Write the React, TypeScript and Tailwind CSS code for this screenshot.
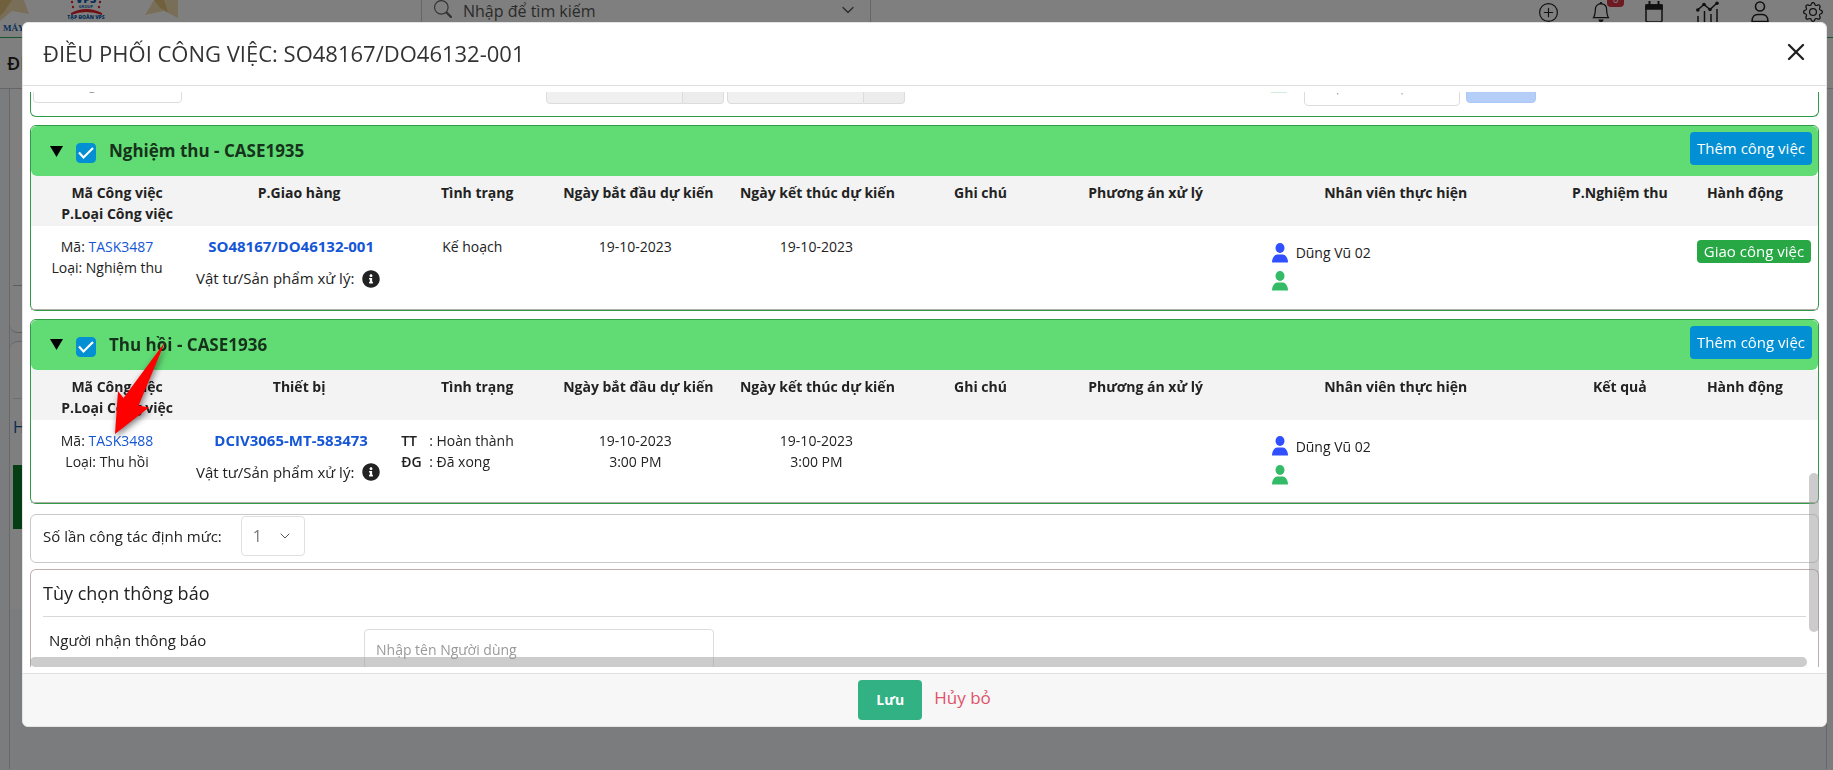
import React, { useState } from "react";
import { ChevronDown, X } from "lucide-react";
import { BsBell, BsGear, BsPlusCircle, BsSearch } from "react-icons/bs";
import { FaInfoCircle } from "react-icons/fa";

const CARD = "shrink-0 rounded-md border border-[#2f9b46] bg-white";
const FIELD = "h-10 rounded border border-[#dcdcdc] px-[11px] text-sm placeholder:text-[#999] outline-none";

type Task = {
  id: string;
  title: string;
  code: string;
  kind: string;
  refColumn: string;
  refCode: string;
  resultColumn: string;
  status: React.ReactNode;
  start: string[];
  end: string[];
  assignee: string;
  canAssign?: boolean;
};

const TASKS: Task[] = [
  {
    id: "case1935",
    title: "Nghiệm thu - CASE1935",
    code: "TASK3487",
    kind: "Nghiệm thu",
    refColumn: "P.Giao hàng",
    refCode: "SO48167/DO46132-001",
    resultColumn: "P.Nghiệm thu",
    status: <p className="pr-2.5 text-center">Kế hoạch</p>,
    start: ["19-10-2023"],
    end: ["19-10-2023"],
    assignee: "Dũng Vũ 02",
    canAssign: true,
  },
  {
    id: "case1936",
    title: "Thu hồi - CASE1936",
    code: "TASK3488",
    kind: "Thu hồi",
    refColumn: "Thiết bị",
    refCode: "DCIV3065-MT-583473",
    resultColumn: "Kết quả",
    status: (
      <dl className="grid grid-cols-[28px_1fr] pl-1.5">
        <dt className="font-semibold">TT</dt>
        <dd>: Hoàn thành</dd>
        <dt className="font-semibold">ĐG</dt>
        <dd>: Đã xong</dd>
      </dl>
    ),
    start: ["19-10-2023", "3:00 PM"],
    end: ["19-10-2023", "3:00 PM"],
    assignee: "Dũng Vũ 02",
  },
];

function Logo() {
  return (
    <svg width="180" height="38" viewBox="0 0 180 38" className="shrink-0">
      <path d="M0 0h24l5 14-17-3L0 21z" fill="#f3dfb0" />
      <path d="M0 0h12L4 12l-4 4z" fill="#e2c078" />
      <path d="M154 0h24v18l-14-7-19 4z" fill="#f3dfb0" />
      <path d="M154 0h10l4 12-8-4z" fill="#e2c078" />
      <text x="86" y="3" textAnchor="middle" fontSize="11" fontWeight="800" fill="#0f5fae">VPS</text>
      <text x="86" y="8" textAnchor="middle" fontSize="4" fontWeight="700" fill="#0f5fae">GROUP</text>
      <g fill="#e01f2d">
        <circle cx="72" cy="2" r="1.2" />
        <circle cx="73" cy="7" r="1.2" />
        <circle cx="100" cy="2" r="1.2" />
        <circle cx="99" cy="7" r="1.2" />
        <path d="M71 13q15-8 31 0v2q-16-6-31 0z" />
      </g>
      <text x="86" y="19" textAnchor="middle" fontSize="5" fontWeight="800" fill="#0f5fae">TẬP ĐOÀN VPS</text>
      <text x="3" y="31" fontSize="9" fontWeight="800" fontFamily="Liberation Serif, serif" fill="#0f5fae">MÁY</text>
    </svg>
  );
}

function CalendarIcon() {
  return (
    <svg width="18" height="22" viewBox="0 0 18 22" fill="none" stroke="currentColor" strokeWidth="1.5">
      <rect x="1" y="4" width="16" height="17" rx="1.5" />
      <path d="M1 4h16v4H1z" fill="currentColor" />
      <path d="M4.5 0v4M13.5 0v4" strokeWidth="2" />
    </svg>
  );
}

function ChartIcon() {
  return (
    <svg width="23" height="22" viewBox="0 0 23 22" fill="none" stroke="currentColor" strokeWidth="1.5">
      <path d="M1.5 9 8 3.500l6 5L21 2M2 15v7M8.500 10v12M15 13v9M21 8v14" />
      <g fill="currentColor" stroke="none">
        <circle cx="1.800" cy="9" r="1.800" />
        <circle cx="8" cy="3.500" r="1.800" />
        <circle cx="14" cy="8.500" r="1.800" />
        <circle cx="21" cy="2.200" r="1.800" />
      </g>
    </svg>
  );
}

function PersonIcon() {
  return (
    <svg width="18" height="22" viewBox="0 0 18 22" fill="none" stroke="currentColor" strokeWidth="1.600">
      <circle cx="9" cy="5.500" r="4.500" />
      <path d="M1 20.500c0-5 3-7 5.500-7h5c2.500 0 5.500 2 5.500 7z" strokeLinejoin="round" />
    </svg>
  );
}

function StaffIcon({ className }: { className: string }) {
  return (
    <svg width="16" height="20" viewBox="0 0 16 20" fill="currentColor" className={className}>
      <ellipse cx="8" cy="5" rx="4.500" ry="5" />
      <path d="M0 19.500c0-5 3-8 5-8h6c2 0 5 3 5 8z" />
    </svg>
  );
}

function BackgroundPage() {
  return (
    <div className="min-h-screen bg-[#f7f9fd]" aria-hidden="true">
      <header className="flex h-[38px] items-start justify-between border-b border-[#2fae5c] bg-white text-[#222]">
        <div className="flex h-full items-start">
          <Logo />
          <div className="ml-[241px] flex h-full w-[450px] items-start gap-[11px] border-x border-[#ccc] px-3">
            <BsSearch size={18} className="text-[#666]" />
            <span className="flex-1 text-base leading-[22px] text-[#555]">Nhập để tìm kiếm</span>
            <ChevronDown size={20} strokeWidth={1.5} className="text-[#555]" />
          </div>
        </div>
        <div className="flex gap-[33px] pt-px pr-[10px] [&>div]:flex [&>div]:h-[22px] [&>div]:w-5 [&>div]:items-center [&>div]:justify-center [&_svg]:shrink-0">
          <div><BsPlusCircle size={19} /></div>
          <div className="relative">
            <BsBell size={20} />
            <span className="absolute -top-3 left-4 flex h-[18px] w-[17px] items-end justify-center rounded bg-[#dc3545] text-[10px] leading-4 text-white">6</span>
          </div>
          <div><CalendarIcon /></div>
          <div><ChartIcon /></div>
          <div><PersonIcon /></div>
          <div><BsGear size={20} /></div>
        </div>
      </header>
      <div className="flex h-[51px] items-center border-b border-[#ccc] bg-white px-[7px] text-lg font-semibold text-[#222]">
        ĐI
      </div>
      <div className="mr-1.5 ml-[9px] border-x border-[#ccd0d6]">
        <div className="h-[244px] rounded-b-lg border-b border-[#bbb] bg-white pt-[196px]">
          <hr className="mx-[3px] border-[#bbb]" />
        </div>
        <div className="mt-2 rounded-t-lg border-t border-[#ccc] bg-white pb-20">
          <div className="mx-[3px] h-[57px] border-b border-[#ddd]" />
          <p className="px-[3px] pt-4 text-base text-[#1155aa]">H</p>
          <div className="mx-[3px] mt-[26px] h-16 bg-[#0a7a28]" />
        </div>
        <div className="h-40" />
      </div>
    </div>
  );
}

function TaskCard({ task }: { task: Task }) {
  const [open, setOpen] = useState(true);
  const [checked, setChecked] = useState(true);

  return (
    <section className={CARD}>
      <div className="flex h-[50px] items-start justify-between rounded-md bg-[#61dc74] pr-[6px] pl-[17px]">
        <div className="flex h-full items-center">
          <button type="button" aria-label="Thu gọn" onClick={() => setOpen((o) => !o)} className="p-0.5">
            <svg width="13" height="11" viewBox="0 0 13 11">
              <path d="M0 0h13L6.500 11z" fill="#000" />
            </svg>
          </button>
          <span className="relative mt-1 ml-[11px] h-5">
            <input
              id={task.id}
              type="checkbox"
              checked={checked}
              onChange={(e) => setChecked(e.target.checked)}
              className="block size-5 appearance-none rounded border border-[#028fd3] bg-white checked:bg-[#028fd3]"
            />
            <svg viewBox="0 0 20 20" className="pointer-events-none absolute inset-0 size-5">
              <path d="m3 9.500 4.500 5L17 5" fill="none" stroke="#fff" strokeWidth="2.200" />
            </svg>
          </span>
          <label htmlFor={task.id} className="ml-[13px] text-[17px] font-bold text-[#16321b]">{task.title}</label>
        </div>
        <button type="button" className="mt-[6px] h-[33px] rounded bg-[#028fd3] px-[7px] text-[15px] whitespace-nowrap text-white">
          Thêm công việc
        </button>
      </div>
      {open && (
        <table className="w-full table-fixed border-b border-[#b3adad] text-sm leading-[21px]">
          <colgroup>
            <col className="w-[172px]" />
            <col className="w-[192px]" />
            <col className="w-[164px]" />
            <col className="w-[158px]" />
            <col className="w-[200px]" />
            <col className="w-[126px]" />
            <col className="w-[204px]" />
            <col className="w-[296px]" />
            <col className="w-[152px]" />
            <col className="w-[122px]" />
          </colgroup>
          <thead className="bg-[#f3f3f3]">
            <tr className="h-[50px] align-top whitespace-nowrap [&>th]:pt-[6px] [&>th]:font-bold">
              <th>Mã Công việc<br />P.Loại Công việc</th>
              <th>{task.refColumn}</th>
              <th>Tình trạng</th>
              <th>Ngày bắt đầu dự kiến</th>
              <th>Ngày kết thúc dự kiến</th>
              <th>Ghi chú</th>
              <th>Phương án xử lý</th>
              <th>Nhân viên thực hiện</th>
              <th>{task.resultColumn}</th>
              <th className="pr-6">Hành động</th>
            </tr>
          </thead>
          <tbody>
            <tr className="h-[83px] text-center align-top whitespace-nowrap [&>td]:pt-[10px]">
              <td className="pr-5">
                <p>Mã: <a href="#" className="text-[#1556d6]">{task.code}</a></p>
                <p>Loại: {task.kind}</p>
              </td>
              <td className="pr-4">
                <a href="#" className="text-[15px] font-bold text-[#1556d6]">{task.refCode}</a>
                <p className="mt-[11px] flex items-center justify-center gap-2 pr-1.5 text-[15px]">
                  Vật tư/Sản phẩm xử lý: <FaInfoCircle size={18} className="shrink-0" />
                </p>
              </td>
              <td className="text-left">{task.status}</td>
              <td className="pr-1.5">{task.start.map((t) => <p key={t}>{t}</p>)}</td>
              <td className="pr-0.5">{task.end.map((t) => <p key={t}>{t}</p>)}</td>
              <td />
              <td />
              <td className="pl-6 text-left">
                <div className="mt-[6px] flex items-center gap-2">
                  <StaffIcon className="text-[#304ffe]" />
                  <span>{task.assignee}</span>
                </div>
                <StaffIcon className="mt-2 text-[#33bb68]" />
              </td>
              <td />
              <td className="pr-1.5">
                {task.canAssign && (
                  <button type="button" className="mt-1 h-[23px] rounded bg-[#28a745] px-[7px] text-[15px] text-white">
                    Giao công việc
                  </button>
                )}
              </td>
            </tr>
          </tbody>
        </table>
      )}
    </section>
  );
}

export default function App() {
  const [trips, setTrips] = useState("1");

  return (
    <div className="relative h-screen overflow-hidden font-['Open_Sans','Noto_Sans',sans-serif] text-[#222]">
      <BackgroundPage />
      <div className="fixed inset-0 bg-black/50 pt-[22px] pr-1.5 pb-[43px] pl-[22px]">
        <div role="dialog" aria-labelledby="dialog-title" className="relative flex h-full flex-col overflow-hidden rounded-md border border-[#e4e4e4] bg-white">
          <div className="flex h-[63px] shrink-0 items-center justify-between border-b border-[#e0e0e0] pr-4 pb-0.5 pl-5">
            <h1 id="dialog-title" className="text-[22px] text-[#333]">ĐIỀU PHỐI CÔNG VIỆC: SO48167/DO46132-001</h1>
            <button type="button" aria-label="Đóng" className="mb-0.5">
              <X size={28} strokeWidth={2} />
            </button>
          </div>

          <div className="relative mx-[7px] my-[6px] flex min-h-0 flex-1 flex-col overflow-hidden">
            <section className={`${CARD} -mt-9 flex h-[61px] items-start border-t-0 pl-0.5`}>
              <input aria-label="Phương án" placeholder="Phương án" className={`${FIELD} mt-[7px] w-[149px]`} />
              <div className="mt-[8px] ml-[364px] flex gap-[3px]">
                {["Ngày bắt đầu", "Ngày kết thúc"].map((label) => (
                  <div key={label} className="flex">
                    <input disabled aria-label={label} className="h-10 w-[137px] rounded-l border border-[#dcdcdc] bg-[#f0f0f0]" />
                    <button type="button" disabled aria-label={label} className="h-10 w-[41px] rounded-r border border-l-0 border-[#dcdcdc] bg-[#ececec]" />
                  </div>
                ))}
              </div>
              <StaffIcon className="mt-[17px] ml-[366px] text-[#99e1b3]" />
              <input aria-label="Nhân sự" placeholder="Chọn nhân sự" className={`${FIELD} mt-[10px] ml-[17px] w-[156px]`} />
              <button type="button" disabled className="mt-[7px] ml-[6px] h-10 w-[70px] rounded border border-[#a9c8f8] bg-[#b5cef8] pt-1.5 text-[15px] font-semibold text-white">
                Giao
              </button>
            </section>

            <div className="mt-2 flex shrink-0 flex-col gap-2">
              {TASKS.map((task) => <TaskCard key={task.id} task={task} />)}
            </div>

            <div className="mt-[10px] flex h-[49px] shrink-0 items-start rounded-md border border-[#c8c8c8] pl-3">
              <label htmlFor="trips" className="pt-[10px] text-[15px]">Số lần công tác định mức:</label>
              <div className="relative mt-px ml-[19px]">
                <select
                  id="trips"
                  value={trips}
                  onChange={(e) => setTrips(e.target.value)}
                  className="h-10 w-16 appearance-none rounded border border-[#e0e0e0] bg-white pl-[11px] text-base text-[#777]"
                >
                  {["1", "2", "3"].map((n) => <option key={n}>{n}</option>)}
                </select>
                <ChevronDown size={16} strokeWidth={1.5} className="pointer-events-none absolute top-3 right-3 text-[#555]" />
              </div>
            </div>

            <section className="mt-1.5 flex-1 shrink-0 rounded-t-md border border-b-0 border-[#c0adad] px-3">
              <h2 className="border-b border-[#d8d8d8] pt-[11px] pb-[11px] text-lg leading-6">Tùy chọn thông báo</h2>
              <div className="mt-3 flex items-start pl-[6px]">
                <label htmlFor="receiver" className="w-[315px] text-[15px] leading-[22px]">Người nhận thông báo</label>
                <input id="receiver" placeholder="Nhập tên Người dùng" className={`${FIELD} w-[350px]`} />
              </div>
            </section>

            {/* overlay scrollbars */}
            <div className="absolute right-3 bottom-0 left-0 h-[10px] rounded-full bg-[#999]/50" />
            <div className="absolute right-0 bottom-[35px] h-[159px] w-[10px] rounded-full bg-[#999]/50" />
          </div>

          <div className="flex h-[53px] shrink-0 items-center justify-center gap-3 border-t border-[#e0e0e0] bg-[#f7f7f7]">
            <button type="button" className="h-10 w-16 rounded bg-[#32b184] text-sm font-bold text-white">Lưu</button>
            <button type="button" className="pb-1 text-[17px] text-[#e0526a]">Hủy bỏ</button>
          </div>

          <svg width="60" height="110" viewBox="110 337 60 110" className="pointer-events-none absolute top-[314px] left-[87px] drop-shadow-[1px_3px_3px_rgba(0,0,0,0.5)]">
            <path d="M165 342 138.600 405.600 149 407.600 115 434 118 391 123.500 398z" fill="#f00" />
          </svg>
        </div>
      </div>
    </div>
  );
}
